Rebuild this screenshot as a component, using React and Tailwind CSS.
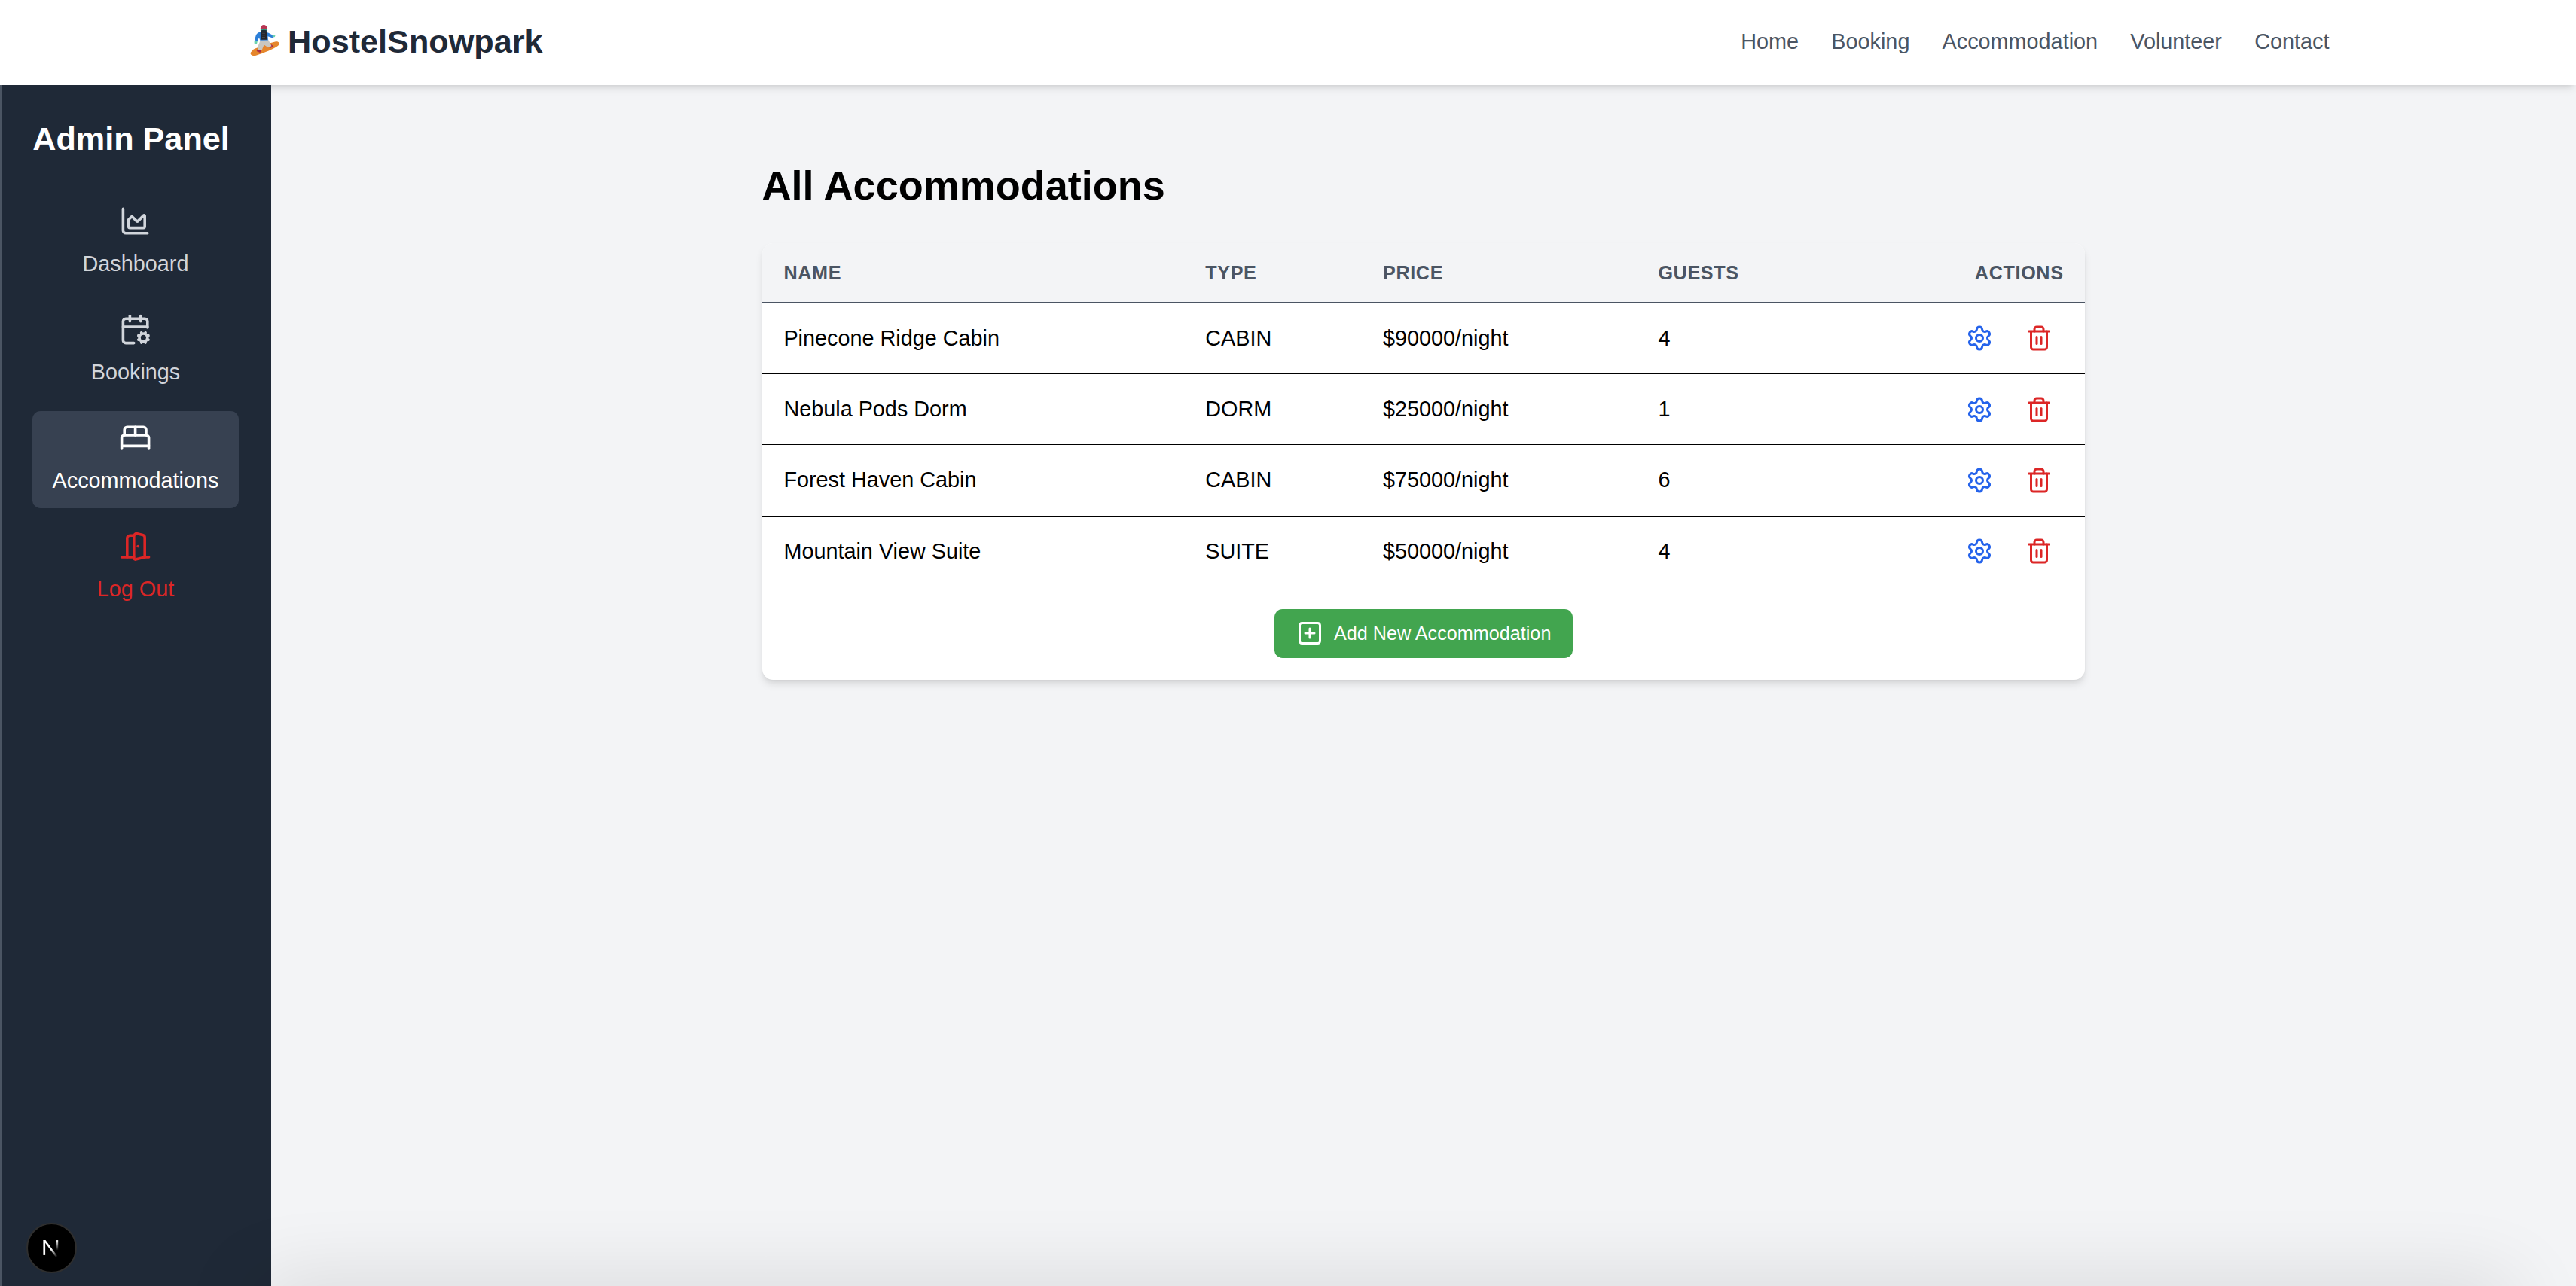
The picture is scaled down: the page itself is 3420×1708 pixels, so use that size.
import React from "react";
import { ChartArea, CalendarCog, BedDouble, DoorOpen, Settings, Trash2, SquarePlus } from "lucide-react";

const rows = [
  ["Pinecone Ridge Cabin", "CABIN", "$90000/night", "4"],
  ["Nebula Pods Dorm", "DORM", "$25000/night", "1"],
  ["Forest Haven Cabin", "CABIN", "$75000/night", "6"],
  ["Mountain View Suite", "SUITE", "$50000/night", "4"],
];

const navLinks = ["Home", "Booking", "Accommodation", "Volunteer", "Contact"];

const sideItems = [
  { label: "Dashboard", Icon: ChartArea, cls: "text-[#d1d5db]" },
  { label: "Bookings", Icon: CalendarCog, cls: "text-[#d1d5db]" },
  { label: "Accommodations", Icon: BedDouble, cls: "text-white bg-[#374151]" },
  { label: "Log Out", Icon: DoorOpen, cls: "text-[#dc2626]" },
];

function Snowboarder() {
  return (
    <svg viewBox="30 30 130 140" className="w-6 h-[25.9px] shrink-0 -translate-y-px">
      <path d="M39 148C34 157 46 165 62 160C90 152 130 135 148 122C158 112 150 103 136 106C110 112 60 130 48 138Z" fill="#e5862c" />
      <path d="M66 135l-4 9 14 6 6-8z" fill="#a92c46" />
      <path d="M108 122l8 10 14-7-8-8z" fill="#a92c46" />
      <path d="M80 94L65 130l4 8 14 2 9-22 16 11 14-6-17-33z" fill="#c9c7bf" />
      <path d="M84 66C72 66 66 70 60 78L54 100l12 3 6-14 4 12 32-1-1-16 22 8 3-9-22-12C103 68 95 65 84 66z" fill="#2c7fd8" />
      <path d="M78 66h24l3 32H78z" fill="#26262a" />
      <path d="M84 72h12M84 80h12M84 88h12" stroke="#55555a" strokeWidth="2" />
      <path d="M53 101l13 2-3 12-10-2z" fill="#6cd3ad" />
      <path d="M126 78l11 1-2 8-10-2z" fill="#6cd3ad" />
      <circle cx="91" cy="51" r="13" fill="#b93452" />
      <path d="M78 54h26v6c-2 7-7 10-13 10s-11-3-13-10z" fill="#1f2b33" />
      <path d="M79 55c7-3 17-3 24 0v6c-8-3-16-3-24 0z" fill="#2f9a82" />
    </svg>
  );
}

function NextLogo() {
  return (
    <div className="absolute left-[19.5px] bottom-[9.5px] w-[37px] h-[37px] rounded-full bg-black border-[1.5px] border-[#2f2f2f] flex items-center justify-center">
      <svg viewBox="0 0 18 18" className="w-[18px] h-[18px]">
        <defs>
          <linearGradient id="nd" x1="0" y1="0" x2="1" y2="1">
            <stop offset="0.55" stopColor="#fff" />
            <stop offset="1" stopColor="#fff" stopOpacity="0" />
          </linearGradient>
          <linearGradient id="ns" x1="0" y1="0" x2="0" y2="1">
            <stop offset="0" stopColor="#fff" />
            <stop offset="1" stopColor="#fff" stopOpacity="0" />
          </linearGradient>
        </defs>
        <rect x="3" y="3.4" width="1.5" height="11" fill="#fff" />
        <path d="M3 3.4h1.7l9 12h-1.8z" fill="url(#nd)" />
        <rect x="12.5" y="3.4" width="1.5" height="7.5" fill="url(#ns)" />
      </svg>
    </div>
  );
}

export default function App() {
  return (
    <div className="relative w-[1900px] h-[948.8px] overflow-hidden bg-[#f3f4f6] flex flex-col [zoom:1.8] font-['Liberation_Sans',Arial,sans-serif]">
      <header className="h-[62.8px] shrink-0 bg-white shadow-md flex items-center">
        <div className="w-[1536px] mx-auto pb-px flex items-center justify-between">
          <div className="flex items-center gap-[5px] pl-[1.3px]">
            <Snowboarder />
            <span className="text-2xl font-bold text-[#1f2937]">HostelSnowpark</span>
          </div>
          <nav className="flex items-center gap-6 text-base text-[#4b5563]">
            {navLinks.map((l) => (
              <a key={l}>{l}</a>
            ))}
          </nav>
        </div>
      </header>

      <div className="flex flex-1 min-h-0">
        <aside className="w-[200px] shrink-0 bg-[#1f2937] border-l-[1.2px] border-[#4b5563] py-6 pr-6 pl-[22.9px]">
          <h2 className="text-2xl font-bold text-white mb-[24.4px]">Admin Panel</h2>
          <ul className="flex flex-col gap-2">
            {sideItems.map(({ label, Icon, cls }) => (
              <li key={label} className={`flex flex-col items-center gap-[7.6px] pt-2 pb-[8.4px] rounded-md text-base ${cls}`}>
                <Icon size={24} />
                <span>{label}</span>
              </li>
            ))}
          </ul>
        </aside>

        <main className="flex-1 p-8">
          <div className="max-w-5xl mx-auto p-6">
            <h1 className="text-3xl font-bold text-black mb-[24.5px]">All Accommodations</h1>
            <div className="bg-white rounded-lg shadow-md overflow-hidden">
              <table className="w-full table-fixed border-separate border-spacing-0 text-left">
                <colgroup>
                  <col className="w-[311px]" />
                  <col className="w-[131px]" />
                  <col className="w-[203px]" />
                  <col />
                  <col className="w-[140px]" />
                </colgroup>
                <thead>
                  <tr className="h-[44.3px] bg-[#f3f4f6]">
                    {["Name", "Type", "Price", "Guests"].map((h) => (
                      <th key={h} className="px-4 border-b border-[#4b5563] text-sm font-bold uppercase tracking-wide text-[#4b5563]">{h}</th>
                    ))}
                    <th className="px-4 border-b border-[#4b5563] text-sm font-bold uppercase tracking-wide text-[#4b5563] text-right">Actions</th>
                  </tr>
                </thead>
                <tbody>
                  {rows.map((r) => (
                    <tr key={r[0]} className="h-[52.47px] text-base text-black">
                      <td className="px-4 border-b border-black">{r[0]}</td>
                      <td className="px-4 border-b border-black">{r[1]}</td>
                      <td className="px-4 border-b border-black">{r[2]}</td>
                      <td className="px-4 border-b border-black">{r[3]}</td>
                      <td className="px-4 border-b border-black">
                        <div className="flex justify-end gap-2">
                          <button className="p-2 text-[#2563eb]"><Settings size={20} /></button>
                          <button className="p-2 text-[#dc2626]"><Trash2 size={20} /></button>
                        </div>
                      </td>
                    </tr>
                  ))}
                </tbody>
              </table>
              <div className="flex justify-center py-4">
                <button className="h-9 px-4 flex items-center gap-2 rounded-md bg-[#42a54f] text-white text-sm">
                  <SquarePlus size={20} />
                  <span>Add New Accommodation</span>
                </button>
              </div>
            </div>
          </div>
        </main>
      </div>
      <div className="absolute left-[190px] right-[47px] top-full h-10 shadow-[0_0_60px_rgba(0,0,0,0.14)]" />
      <NextLogo />
    </div>
  );
}
